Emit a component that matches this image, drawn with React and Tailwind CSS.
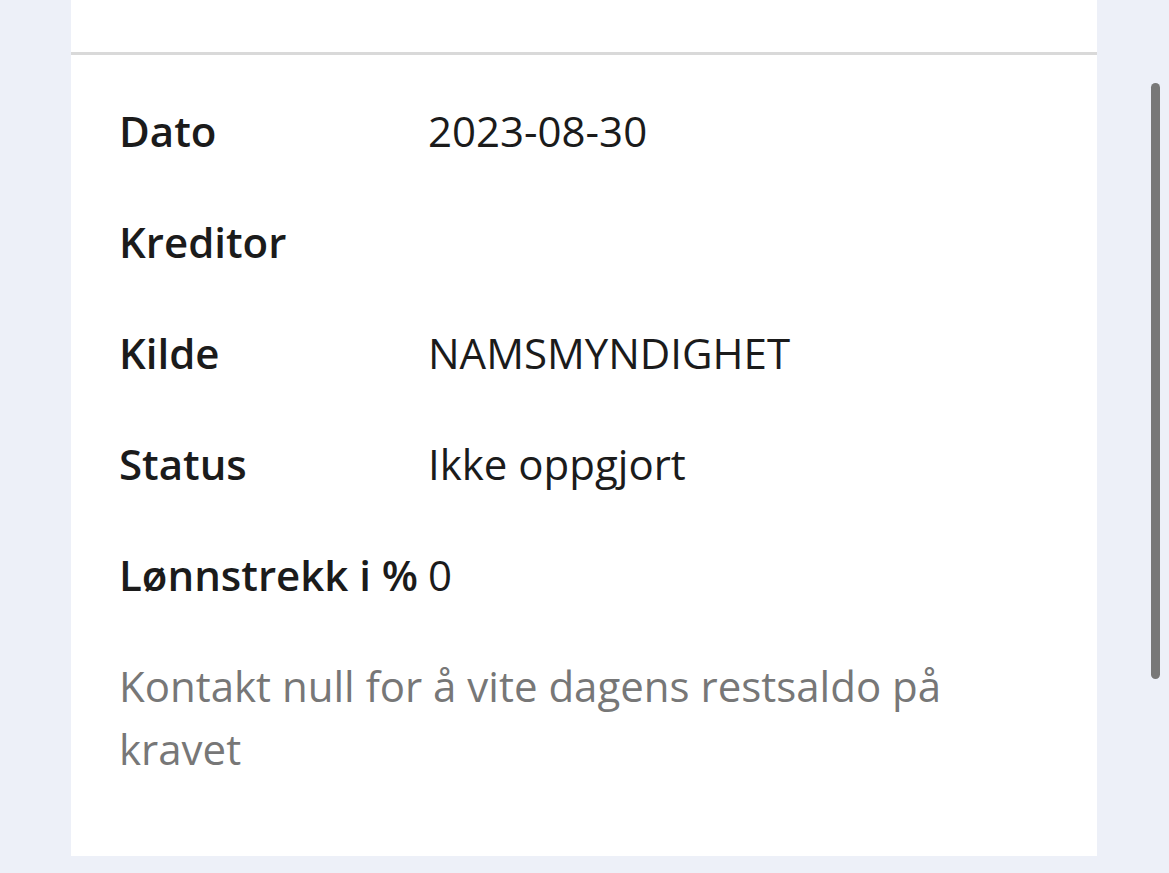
import React from "react";

const rows = [
  { label: "Dato", value: "2023-08-30" },
  { label: "Kreditor", value: "" },
  { label: "Kilde", value: "NAMSMYNDIGHET" },
  { label: "Status", value: "Ikke oppgjort" },
  { label: "Lønnstrekk i %", value: "0" },
];

export default function App() {
  return (
    <div
      className="relative min-h-[873px] bg-[#edf0f8] pl-[71px] pr-[72px] pb-[18px]"
      style={{ fontFamily: '"Open Sans", sans-serif' }}
    >
      <div className="bg-white">
        <div className="h-[55px] border-b-[3px] border-[#d9d9d9]" />
        <div className="pl-[48px] pr-[49px] pt-[44px] pb-[76px]">
          <dl className="flex flex-col gap-[48px]">
            {rows.map((r) => (
              <div key={r.label} className="flex text-[42px] leading-[63px] text-[#1b1b1b]">
                <dt className="w-[309px] shrink-0 font-semibold whitespace-nowrap">
                  {r.label}
                </dt>
                <dd className="min-h-[63px]">{r.value}</dd>
              </div>
            ))}
          </dl>
          <p className="mt-[48px] text-[42px] leading-[63px] text-[#777777] max-w-[840px]">
            Kontakt null for å vite dagens restsaldo på kravet
          </p>
        </div>
      </div>
      {/* scrollbar overlay */}
      <div className="absolute right-[9px] top-[83px] h-[596px] w-[9px] rounded-full bg-[#787878]" />
    </div>
  );
}
